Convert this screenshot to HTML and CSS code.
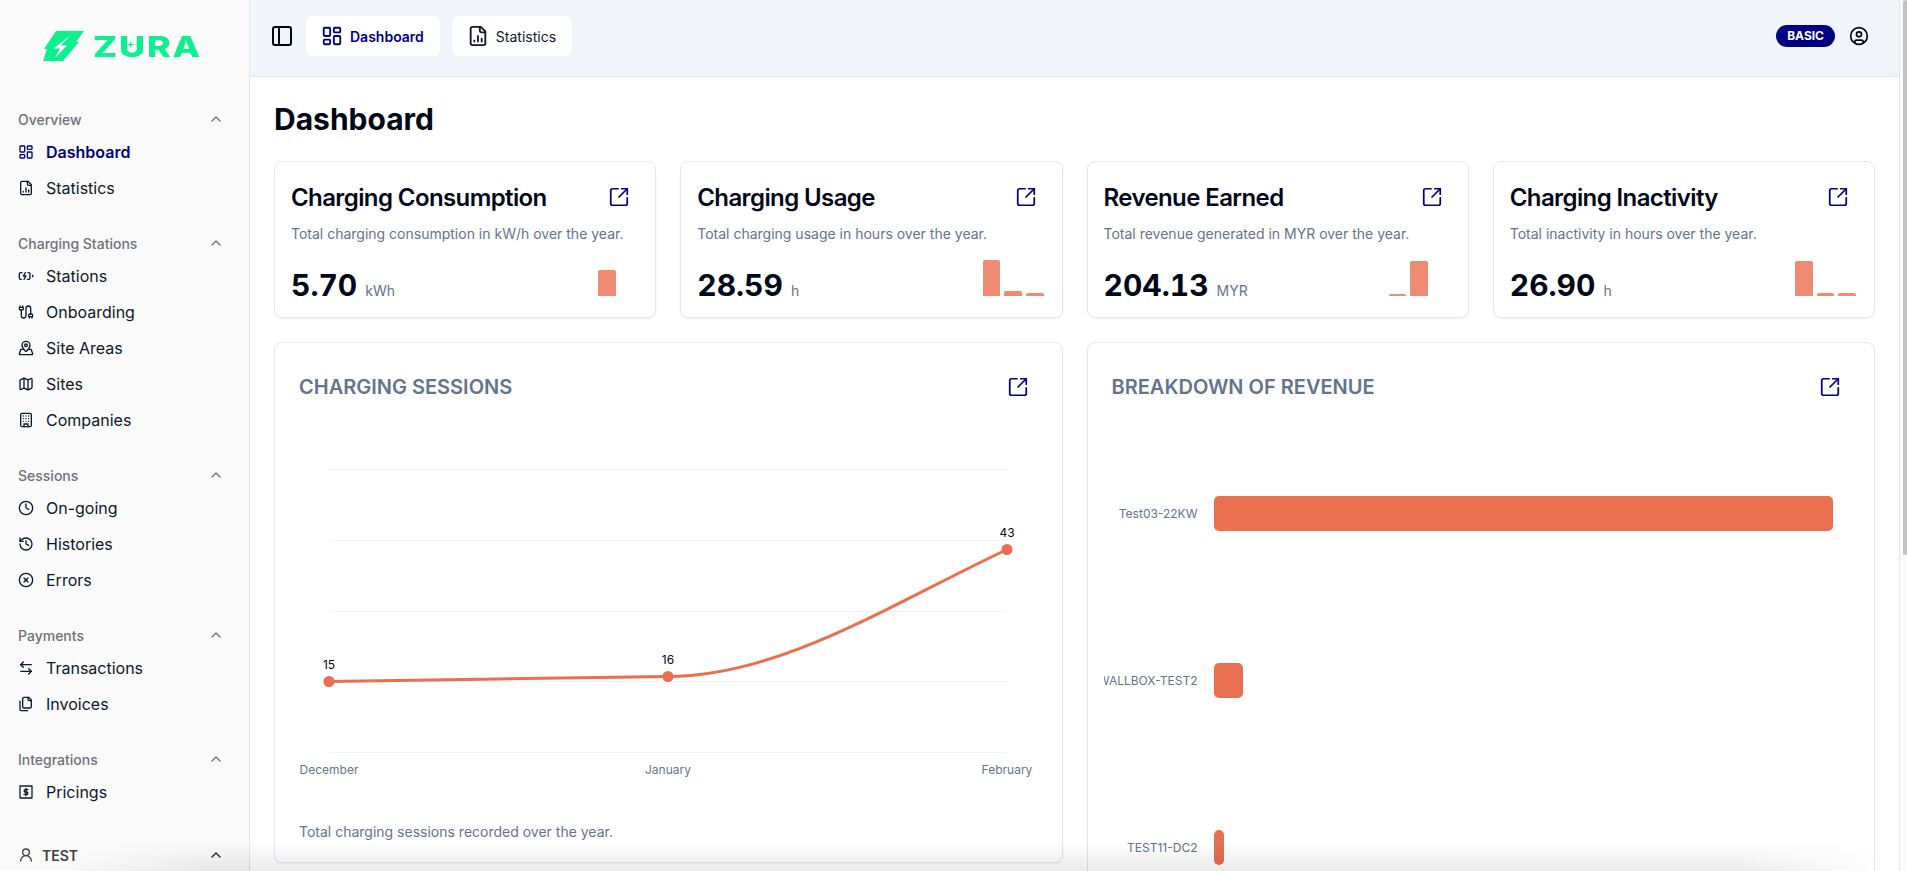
FILE: index.html
```html
<!DOCTYPE html>
<html lang="en">
<head>
    <meta charset="UTF-8">
    <meta name="viewport" content="width=device-width, initial-scale=1.0">
    <title>Dashboard</title>
    <link rel="stylesheet" href="styles.css">
</head>
<body>
    <!-- Icon sprite -->
    <svg class="sprite" xmlns="http://www.w3.org/2000/svg">
        <symbol id="i-dashboard" viewBox="0 0 24 24"><rect x="3" y="3" width="7" height="9" rx="1"/><rect x="14" y="3" width="7" height="5" rx="1"/><rect x="14" y="12" width="7" height="9" rx="1"/><rect x="3" y="16" width="7" height="5" rx="1"/></symbol>
        <symbol id="i-stats" viewBox="0 0 24 24"><path d="M15 2H6a2 2 0 0 0-2 2v16a2 2 0 0 0 2 2h12a2 2 0 0 0 2-2V7Z"/><path d="M14 2v4a2 2 0 0 0 2 2h4"/><path d="M8 18v-1"/><path d="M12 18v-6"/><path d="M16 18v-3"/></symbol>
        <symbol id="i-station" viewBox="0 0 24 24"><path d="M15 7h1a2 2 0 0 1 2 2v6a2 2 0 0 1-2 2h-2"/><path d="M6 7H4a2 2 0 0 0-2 2v6a2 2 0 0 0 2 2h1"/><path d="m11 7-3 5h4l-3 5"/><path d="M22 11v2"/></symbol>
        <symbol id="i-cable" viewBox="0 0 24 24"><path d="M17 21v-2a1 1 0 0 1-1-1v-1a2 2 0 0 1 2-2h2a2 2 0 0 1 2 2v1a1 1 0 0 1-1 1"/><path d="M19 15V6.5a1 1 0 0 0-7 0v11a1 1 0 0 1-7 0V9"/><path d="M21 21v-2h-4"/><path d="M3 5h4V3"/><path d="M7 5a1 1 0 0 1 1 1v1a2 2 0 0 1-2 2H4a2 2 0 0 1-2-2V6a1 1 0 0 1 1-1V3"/></symbol>
        <symbol id="i-pin" viewBox="0 0 24 24"><path d="M18 8c0 3.613-3.869 7.429-5.393 8.795a1 1 0 0 1-1.214 0C9.87 15.429 6 11.613 6 8a6 6 0 0 1 12 0"/><circle cx="12" cy="8" r="2"/><path d="M8.714 14h-3.71a1 1 0 0 0-.948.683l-2.004 6A1 1 0 0 0 3 22h18a1 1 0 0 0 .948-1.316l-2-6a1 1 0 0 0-.949-.684h-3.712"/></symbol>
        <symbol id="i-map" viewBox="0 0 24 24"><path d="M14.106 5.553a2 2 0 0 0 1.788 0l3.659-1.83A1 1 0 0 1 21 4.619v12.764a1 1 0 0 1-.553.894l-4.553 2.277a2 2 0 0 1-1.788 0l-4.212-2.106a2 2 0 0 0-1.788 0l-3.659 1.83A1 1 0 0 1 3 19.381V6.618a1 1 0 0 1 .553-.894l4.553-2.277a2 2 0 0 1 1.788 0z"/><path d="M15 5.764v15"/><path d="M9 3.236v15"/></symbol>
        <symbol id="i-building" viewBox="0 0 24 24"><rect x="4" y="2" width="16" height="20" rx="2"/><path d="M9 22v-4h6v4"/><path d="M8 6h.01M16 6h.01M12 6h.01M12 10h.01M12 14h.01M16 10h.01M16 14h.01M8 10h.01M8 14h.01"/></symbol>
        <symbol id="i-clock" viewBox="0 0 24 24"><circle cx="12" cy="12" r="10"/><path d="M12 6v6l4 2"/></symbol>
        <symbol id="i-history" viewBox="0 0 24 24"><path d="M3 12a9 9 0 1 0 9-9 9.75 9.75 0 0 0-6.74 2.74L3 8"/><path d="M3 3v5h5"/><path d="M12 7v5l4 2"/></symbol>
        <symbol id="i-error" viewBox="0 0 24 24"><circle cx="12" cy="12" r="10"/><path d="m15 9-6 6"/><path d="m9 9 6 6"/></symbol>
        <symbol id="i-swap" viewBox="0 0 24 24"><path d="M8 3 4 7l4 4"/><path d="M4 7h16"/><path d="m16 21 4-4-4-4"/><path d="M20 17H4"/></symbol>
        <symbol id="i-files" viewBox="0 0 24 24"><path d="M20 7h-3a2 2 0 0 1-2-2V2"/><path d="M9 18a2 2 0 0 1-2-2V4a2 2 0 0 1 2-2h7l4 4v10a2 2 0 0 1-2 2Z"/><path d="M3 7.6v12.8A1.6 1.6 0 0 0 4.6 22h9.8"/></symbol>
        <symbol id="i-price" viewBox="0 0 24 24"><rect x="3" y="3" width="18" height="18" stroke-dasharray="2.2 1"/><path d="M15 8.5h-4a1.75 1.75 0 0 0 0 3.5h2a1.75 1.75 0 0 1 0 3.5H9"/><path d="M12 6.5v11"/></symbol>
        <symbol id="i-user" viewBox="0 0 24 24"><circle cx="12" cy="8" r="5"/><path d="M20 21a8 8 0 0 0-16 0"/></symbol>
        <symbol id="i-account" viewBox="0 0 24 24"><circle cx="12" cy="12" r="10"/><circle cx="12" cy="10" r="3"/><path d="M7 20.662V19a2 2 0 0 1 2-2h6a2 2 0 0 1 2 2v1.662"/></symbol>
        <symbol id="i-chevron" viewBox="0 0 24 24"><path d="m18 15-6-6-6 6"/></symbol>
        <symbol id="i-panel" viewBox="0 0 24 24"><rect x="3" y="3" width="18" height="18" rx="2"/><path d="M9 3v18"/></symbol>
        <symbol id="i-open" viewBox="0 0 24 24"><path d="M21 13v6a2 2 0 0 1-2 2H5a2 2 0 0 1-2-2V5a2 2 0 0 1 2-2h6"/><path d="m21 3-9 9"/><path d="M15 3h6v6"/></symbol>
    </svg>

    <div class="app">
        <!-- Sidebar -->
        <aside class="sidebar">
            <div class="brand">
                <svg class="brand-mark" viewBox="0 0 42 31" xmlns="http://www.w3.org/2000/svg">
                    <polygon class="mark-body" points="13,0 41,0 33,11 36,11 20,30 0,30 4,18 1,18"/>
                    <polygon class="mark-bolt" points="28,4 17.5,14.5 24,14.5 12,27 17,17.5 10.5,17.5"/>
                </svg>
                <span class="brand-name">ZURA<svg class="brand-star" viewBox="0 0 10 10"><path d="M5 0 6 4 10 5 6 6 5 10 4 6 0 5 4 4Z"/></svg></span>
            </div>

            <div class="nav-group">
                <div class="nav-label">Overview <svg class="chev"><use href="#i-chevron"/></svg></div>
                <a class="nav-item active"><svg class="ico"><use href="#i-dashboard"/></svg>Dashboard</a>
                <a class="nav-item"><svg class="ico"><use href="#i-stats"/></svg>Statistics</a>
            </div>

            <div class="nav-group">
                <div class="nav-label">Charging Stations <svg class="chev"><use href="#i-chevron"/></svg></div>
                <a class="nav-item"><svg class="ico"><use href="#i-station"/></svg>Stations</a>
                <a class="nav-item"><svg class="ico"><use href="#i-cable"/></svg>Onboarding</a>
                <a class="nav-item"><svg class="ico"><use href="#i-pin"/></svg>Site Areas</a>
                <a class="nav-item"><svg class="ico"><use href="#i-map"/></svg>Sites</a>
                <a class="nav-item"><svg class="ico"><use href="#i-building"/></svg>Companies</a>
            </div>

            <div class="nav-group">
                <div class="nav-label">Sessions <svg class="chev"><use href="#i-chevron"/></svg></div>
                <a class="nav-item"><svg class="ico"><use href="#i-clock"/></svg>On-going</a>
                <a class="nav-item"><svg class="ico"><use href="#i-history"/></svg>Histories</a>
                <a class="nav-item"><svg class="ico"><use href="#i-error"/></svg>Errors</a>
            </div>

            <div class="nav-group">
                <div class="nav-label">Payments <svg class="chev"><use href="#i-chevron"/></svg></div>
                <a class="nav-item"><svg class="ico"><use href="#i-swap"/></svg>Transactions</a>
                <a class="nav-item"><svg class="ico"><use href="#i-files"/></svg>Invoices</a>
            </div>

            <div class="nav-group">
                <div class="nav-label">Integrations <svg class="chev"><use href="#i-chevron"/></svg></div>
                <a class="nav-item"><svg class="ico"><use href="#i-price"/></svg>Pricings</a>
            </div>

            <div class="nav-user">
                <svg class="ico"><use href="#i-user"/></svg>
                <span>TEST</span>
                <svg class="chev"><use href="#i-chevron"/></svg>
            </div>
        </aside>

        <!-- Main -->
        <div class="main">
            <header class="topbar">
                <svg class="panel-toggle"><use href="#i-panel"/></svg>
                <a class="tab active"><svg class="tab-ico"><use href="#i-dashboard"/></svg>Dashboard</a>
                <a class="tab"><svg class="tab-ico"><use href="#i-stats"/></svg>Statistics</a>
                <span class="plan">BASIC</span>
                <svg class="account"><use href="#i-account"/></svg>
            </header>

            <main class="content">
                <h1 class="page-title">Dashboard</h1>

                <section class="stat-grid">
                    <div class="stat-card">
                        <div class="stat-head">
                            <h2>Charging Consumption</h2>
                            <button class="open-btn"><svg><use href="#i-open"/></svg></button>
                        </div>
                        <p class="stat-desc">Total charging consumption in kW/h over the year.</p>
                        <div class="stat-foot">
                            <div class="stat-value"><strong>5.70</strong><span>kWh</span></div>
                            <div class="spark"><i style="height:0"></i><i style="height:26px"></i><i style="height:0"></i></div>
                        </div>
                    </div>

                    <div class="stat-card">
                        <div class="stat-head">
                            <h2>Charging Usage</h2>
                            <button class="open-btn"><svg><use href="#i-open"/></svg></button>
                        </div>
                        <p class="stat-desc">Total charging usage in hours over the year.</p>
                        <div class="stat-foot">
                            <div class="stat-value"><strong>28.59</strong><span>h</span></div>
                            <div class="spark"><i style="height:36px"></i><i style="height:5px"></i><i style="height:3px"></i></div>
                        </div>
                    </div>

                    <div class="stat-card">
                        <div class="stat-head">
                            <h2>Revenue Earned</h2>
                            <button class="open-btn"><svg><use href="#i-open"/></svg></button>
                        </div>
                        <p class="stat-desc">Total revenue generated in MYR over the year.</p>
                        <div class="stat-foot">
                            <div class="stat-value"><strong>204.13</strong><span>MYR</span></div>
                            <div class="spark"><i style="height:2px"></i><i style="height:35px"></i><i style="height:0"></i></div>
                        </div>
                    </div>

                    <div class="stat-card">
                        <div class="stat-head">
                            <h2>Charging Inactivity</h2>
                            <button class="open-btn"><svg><use href="#i-open"/></svg></button>
                        </div>
                        <p class="stat-desc">Total inactivity in hours over the year.</p>
                        <div class="stat-foot">
                            <div class="stat-value"><strong>26.90</strong><span>h</span></div>
                            <div class="spark"><i style="height:35px"></i><i style="height:3px"></i><i style="height:3px"></i></div>
                        </div>
                    </div>
                </section>

                <section class="chart-grid">
                    <div class="chart-card">
                        <div class="chart-head">
                            <h2>CHARGING SESSIONS</h2>
                            <button class="open-btn"><svg><use href="#i-open"/></svg></button>
                        </div>
                        <svg class="line-chart" viewBox="0 0 736.5 377" xmlns="http://www.w3.org/2000/svg">
                            <g class="grid-lines">
                                <line x1="29" x2="707" y1="24.5" y2="24.5"/>
                                <line x1="29" x2="707" y1="95.5" y2="95.5"/>
                                <line x1="29" x2="707" y1="166.5" y2="166.5"/>
                                <line x1="29" x2="707" y1="236.5" y2="236.5"/>
                                <line x1="29" x2="707" y1="307.5" y2="307.5"/>
                            </g>
                            <path class="line-path" d="M29 236.5C142 234.8 255 233.2 368 231.5C481 231.5 594 157.5 707 104.5"/>
                            <circle class="line-dot" cx="29" cy="236.5" r="5.5"/>
                            <circle class="line-dot" cx="368" cy="231.5" r="5.5"/>
                            <circle class="line-dot" cx="707" cy="104.5" r="5.5"/>
                            <text class="dot-label" x="29" y="223.5">15</text>
                            <text class="dot-label" x="368" y="218.5">16</text>
                            <text class="dot-label" x="707" y="91.5">43</text>
                            <text class="axis-label" x="29" y="329">December</text>
                            <text class="axis-label" x="368" y="329">January</text>
                            <text class="axis-label" x="707" y="329">February</text>
                        </svg>
                        <p class="chart-note">Total charging sessions recorded over the year.</p>
                    </div>

                    <div class="chart-card">
                        <div class="chart-head">
                            <h2>BREAKDOWN OF REVENUE</h2>
                            <button class="open-btn"><svg><use href="#i-open"/></svg></button>
                        </div>
                        <div class="bars">
                            <div class="bar-row">
                                <span class="bar-name">Test03-22KW</span>
                                <div class="bar-track"><div class="bar" style="width:100%"></div></div>
                            </div>
                            <div class="bar-row">
                                <span class="bar-name">WALLBOX-TEST2</span>
                                <div class="bar-track"><div class="bar" style="width:4.7%"></div></div>
                            </div>
                            <div class="bar-row">
                                <span class="bar-name">TEST11-DC2</span>
                                <div class="bar-track"><div class="bar" style="width:1.55%"></div></div>
                            </div>
                        </div>
                    </div>
                </section>
            </main>
        </div>

        <div class="scroll-rail"><div class="scroll-thumb"></div></div>

        <div class="bottom-fade"></div>
    </div>
</body>
</html>
```

FILE: styles.css
```css
* {
    margin: 0;
    padding: 0;
    box-sizing: border-box;
}

html, body {
    height: 100%;
    overflow: hidden;
}

body {
    font-family: Inter, "Liberation Sans", sans-serif;
    color: #020817;
    background: #fff;
}

.sprite {
    display: none;
}

svg {
    fill: none;
    stroke: currentColor;
    stroke-width: 2;
    stroke-linecap: round;
    stroke-linejoin: round;
}

.app {
    display: flex;
    height: 100vh;
    position: relative;
    overflow: hidden;
}

/* Sidebar */
.sidebar {
    width: 250px;
    flex-shrink: 0;
    height: 100%;
    overflow: hidden;
    background: #fafafa;
    border-right: 1px solid #e2e8f0;
    padding-top: 31px;
}

.brand {
    display: flex;
    align-items: center;
    gap: 8px;
    height: 31px;
    padding-left: 43px;
    margin-bottom: 44px;
}

.brand-mark {
    width: 42px;
    height: 31px;
    stroke: none;
}

.mark-body {
    fill: #0cf090;
}

.mark-bolt {
    fill: #fafafa;
}

.brand-name {
    position: relative;
    display: inline-block;
    margin-top: 2px;
    font-size: 28px;
    font-weight: 800;
    line-height: 31px;
    letter-spacing: 1.4px;
    color: #0cf090;
    transform: scaleX(1.28);
    transform-origin: left center;
}

.brand-star {
    position: absolute;
    left: 26px;
    top: 8px;
    width: 7px;
    height: 9px;
    fill: #0cf090;
    stroke: none;
}

.nav-group {
    margin-bottom: 24px;
}

.nav-label {
    display: flex;
    align-items: center;
    justify-content: space-between;
    height: 28px;
    padding: 0 25px 2px 18px;
    font-size: 14px;
    font-weight: 500;
    color: #71717a;
}

.chev {
    width: 16px;
    height: 16px;
    color: #71717a;
}

.nav-item {
    display: flex;
    align-items: center;
    gap: 12px;
    height: 36px;
    padding-left: 18px;
    font-size: 16px;
    color: #0f172a;
}

.nav-item.active {
    font-weight: 600;
    color: #000080;
}

.ico {
    width: 16px;
    height: 16px;
    flex-shrink: 0;
}

.nav-user {
    display: flex;
    align-items: center;
    gap: 8px;
    height: 28px;
    margin-top: 32px;
    padding: 0 25px 2px 18px;
    font-size: 14px;
    font-weight: 600;
    color: #3f3f46;
}

.nav-user span {
    flex: 1;
}

.nav-user .chev {
    color: #27272a;
}

/* Main area */
.main {
    flex: 1;
    min-width: 0;
    height: 100%;
    overflow: hidden;
}

.scroll-rail {
    width: 8px;
    flex-shrink: 0;
    background: #fafafa;
    border-left: 1px solid #e6e6e6;
}

.scroll-thumb {
    width: 4px;
    height: 555px;
    margin-left: 3px;
    background: #c1c1c1;
    border-radius: 2px;
}

.topbar {
    display: flex;
    align-items: center;
    height: 77px;
    padding: 0 30px 4px 20px;
    background: #f1f5f9;
    border-bottom: 1px solid #e2e8f0;
}

.panel-toggle {
    width: 24px;
    height: 24px;
    margin-right: 12px;
    color: #020817;
}

.tab {
    display: flex;
    align-items: center;
    gap: 7px;
    height: 40px;
    padding: 0 16px 0 15px;
    margin-right: 12px;
    background: #fff;
    border-radius: 6px;
    font-size: 14px;
    color: #0f172a;
}

.tab.active {
    font-weight: 600;
    color: #000080;
}

.tab-ico {
    width: 22px;
    height: 22px;
}

.plan {
    margin-left: auto;
    height: 22px;
    line-height: 22px;
    padding: 0 11px;
    border-radius: 11px;
    background: #000080;
    color: #fff;
    font-size: 12px;
    font-weight: 700;
}

.account {
    width: 20px;
    height: 20px;
    margin-left: 14px;
    color: #020817;
}

.content {
    padding: 24px;
}

.page-title {
    font-size: 30px;
    font-weight: 700;
    line-height: 36px;
    margin-bottom: 24px;
}

/* Stat cards */
.stat-grid {
    display: grid;
    grid-template-columns: repeat(4, 1fr);
    gap: 24px;
    margin-bottom: 24px;
}

.stat-card {
    height: 157px;
    padding: 17px 18px 20px 16px;
    background: #fff;
    border: 1px solid #e2e8f0;
    border-radius: 8px;
    box-shadow: 0 1px 2px rgba(0, 0, 0, 0.05);
}

.stat-head {
    display: flex;
    align-items: center;
    justify-content: space-between;
    height: 36px;
}

.stat-head h2 {
    font-size: 24px;
    font-weight: 600;
    letter-spacing: -0.6px;
}

.open-btn {
    display: flex;
    align-items: center;
    justify-content: center;
    width: 36px;
    height: 36px;
    background: none;
    border: none;
    color: #000080;
}

.open-btn svg {
    width: 22px;
    height: 22px;
    stroke-width: 1.9;
}

.stat-desc {
    margin-top: 9px;
    font-size: 14px;
    line-height: 20px;
    color: #64748b;
}

.stat-foot {
    display: flex;
    align-items: flex-end;
    justify-content: space-between;
    height: 36px;
    margin-top: 16px;
}

.stat-value {
    display: flex;
    align-items: baseline;
    gap: 8px;
    margin-bottom: -7px;
}

.stat-value strong {
    font-size: 30px;
    font-weight: 700;
    line-height: 36px;
    font-variant-numeric: tabular-nums;
}

.stat-value span {
    font-size: 14px;
    color: #64748b;
}

.spark {
    display: flex;
    align-items: flex-end;
    gap: 4px;
    width: 61px;
    height: 36px;
}

.spark i {
    flex: 1;
    background: #ef8a73;
    border-radius: 2px 2px 0 0;
}

/* Chart cards */
.chart-grid {
    display: grid;
    grid-template-columns: repeat(2, 1fr);
    gap: 24px;
    align-items: start;
}

.chart-card {
    padding: 26px 25px 20px;
    background: #fff;
    border: 1px solid #e2e8f0;
    border-radius: 8px;
    box-shadow: 0 1px 2px rgba(0, 0, 0, 0.05);
}

.chart-head {
    display: flex;
    align-items: center;
    justify-content: space-between;
    height: 36px;
    margin: 0 1px 0 -1px;
}

.chart-head h2 {
    font-size: 20px;
    font-weight: 600;
    color: #64748b;
}

.line-chart {
    display: block;
    width: 100%;
    height: 377px;
    margin-top: 40px;
    stroke: none;
}

.grid-lines line {
    stroke: #f1f3f6;
    stroke-width: 1;
}

.line-path {
    fill: none;
    stroke: #e96f51;
    stroke-width: 3;
}

.line-dot {
    fill: #e96f51;
    stroke: none;
}

.dot-label,
.axis-label {
    font-family: Inter, "Liberation Sans", sans-serif;
    font-size: 12px;
    text-anchor: middle;
}

.dot-label {
    fill: #020817;
}

.axis-label {
    fill: #64748b;
}

.chart-note {
    margin-left: -1px;
    font-size: 14px;
    line-height: 20px;
    color: #64748b;
}

.bars {
    display: flex;
    flex-direction: column;
    gap: 132px;
    margin-top: 91px;
    height: 700px;
}

.bar-row {
    display: flex;
    align-items: center;
    height: 35px;
}

.bar-name {
    width: 94px;
    margin-left: -9px;
    flex-shrink: 0;
    display: flex;
    justify-content: flex-end;
    white-space: nowrap;
    overflow: hidden;
    font-size: 12px;
    color: #64748b;
}

.bar-track {
    flex: 1;
    margin-left: 16px;
    margin-right: 16px;
}

.bar {
    height: 35px;
    min-width: 10px;
    background: #e96f51;
    border-radius: 5px;
}

/* Soft shade along the bottom of the window */
.bottom-fade {
    position: absolute;
    left: 0;
    right: 0;
    bottom: 0;
    height: 30px;
    background: linear-gradient(to bottom, rgba(0, 0, 0, 0), rgba(0, 0, 0, 0.08));
    -webkit-mask-image: linear-gradient(to right, transparent 60px, #000 220px, #000 1740px, transparent 1880px);
    mask-image: linear-gradient(to right, transparent 60px, #000 220px, #000 1740px, transparent 1880px);
    pointer-events: none;
}
```
